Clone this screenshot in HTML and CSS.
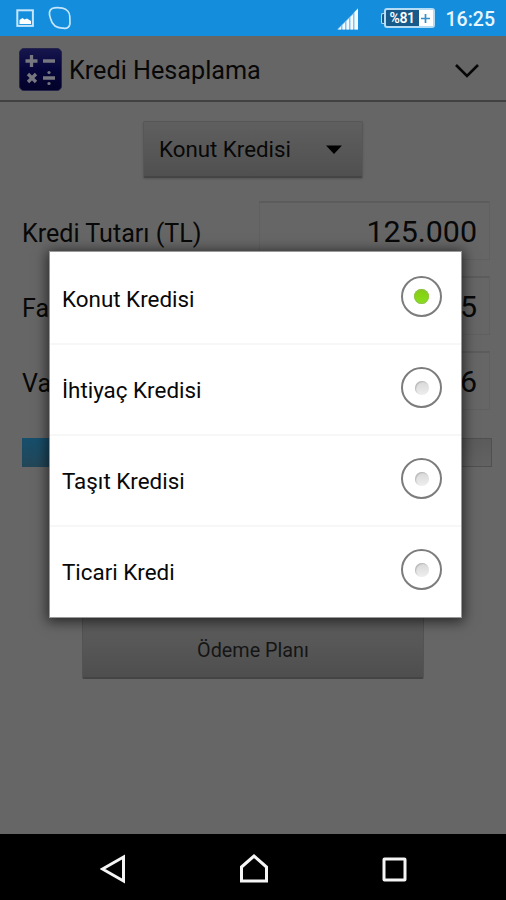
FILE: index.html
```html
<!DOCTYPE html>
<html lang="tr">
<head>
<meta charset="utf-8">
<title>Kredi Hesaplama</title>
<link rel="stylesheet" href="styles.css">
</head>
<body>
<div class="screen">
  <header class="status">
    <svg class="status-left" width="60" height="36" viewBox="0 0 60 36" fill="none">
      <rect x="1.3" y="10.3" width="15.6" height="15.6" stroke="#c4e5fa" stroke-width="2"/>
      <path d="M3.500 24v-4l3-2 2 1.500 2.500-1 4 2.500v3z" fill="#fff"/>
      <path d="M36 8.500c3-1.200 7-1 10.500-.4 4.500 1 7.300 4.500 7.300 8.400-.1 3 .5 5 0 8-.6 3-3.300 4.500-6.300 3.600-3-.2-5.500.2-8.500-2.100-3-2.300-3.800-4.500-4.500-7.500-1.300-3.500-1.800-8 1.500-10z" stroke="#c4e5fa" stroke-width="1.700"/>
    </svg>
    <div class="status-right">
      <svg class="signal" width="22" height="22" viewBox="0 0 22 22" fill="#f2faff">
        <path d="M0 21.500 21 .5v21z" opacity=".5"/>
        <path d="M1 21.500 4 18.500v3zM5.500 17l2.500-2.500v7H5.500zM9.500 13l2.500-2.500v11H9.500zM13.500 9l2.500-2.500v15h-2.500zM17.500 4 21 .5v21h-3.500z"/>
      </svg>
      <div class="nub"></div>
      <div class="battery"><span class="level">%81</span><span class="charge"><svg width="9" height="9" viewBox="0 0 9 9"><path d="M4.500 0v9M0 4.500h9" stroke="#368fcb" stroke-width="1.700"/></svg></span></div>
      <span class="clock">16:25</span>
    </div>
  </header>
  <div class="titlebar">
    <svg class="logo" width="43" height="43" viewBox="0 0 43 43">
      <defs><linearGradient id="navy" x2="0" y2="1"><stop stop-color="#17164d"/><stop offset=".45" stop-color="#07063d"/><stop offset="1" stop-color="#030229"/></linearGradient></defs>
      <rect x=".5" y=".5" width="42" height="42" rx="4.500" fill="url(#navy)" stroke="#25244b"/>
      <path d="M12.500 7v12M6.500 13h12M24 13h12M24 30h12M9 26l8 8M17 26l-8 8" stroke="#777780" stroke-width="3.300"/>
      <circle cx="30" cy="24.500" r="1.600" fill="#777780"/><circle cx="30" cy="35.500" r="1.600" fill="#777780"/>
    </svg>
    <h1>Kredi Hesaplama</h1>
    <svg class="chevron" width="26" height="16" viewBox="0 0 26 16"><path d="M2 2 13 13 24 2" fill="none" stroke="#070707" stroke-width="2.600"/></svg>
  </div>
  <main>
    <div class="spinner"><span>Konut Kredisi</span><svg width="16" height="9" viewBox="0 0 16 9"><path d="M0 .5h16L8 9z"/></svg></div>
    <div class="row"><label>Kredi Tutarı (TL)</label><div class="field">125.000</div></div>
    <div class="row"><label>Fa</label><div class="field">5</div></div>
    <div class="row"><label>Va</label><div class="field">6</div></div>
    <div class="progress"><div class="fill"></div></div>
    <div class="button">Ödeme Planı</div>
  </main>
  <nav>
    <svg width="26" height="30" viewBox="0 0 26 30"><path d="M2.500 15 23.500 3v24z"/></svg>
    <svg width="30" height="30" viewBox="0 0 30 30"><path d="M2.500 13 15 2 27.500 13v14h-25z"/></svg>
    <svg width="25" height="25" viewBox="0 0 25 25"><rect x="2" y="2" width="21" height="21" rx=".5"/></svg>
  </nav>
  <div class="dialog">
    <div class="option"><span>Konut Kredisi</span><i class="radio on"></i></div>
    <div class="option"><span>İhtiyaç Kredisi</span><i class="radio"></i></div>
    <div class="option"><span>Taşıt Kredisi</span><i class="radio"></i></div>
    <div class="option"><span>Ticari Kredi</span><i class="radio"></i></div>
  </div>
</div>
</body>
</html>
```
FILE: styles.css
```css
* { box-sizing: border-box; }
body { margin: 0; font-family: Roboto, sans-serif; color: #080808; }
.screen { position: relative; width: 506px; height: 900px; overflow: hidden; display: flex; flex-direction: column; background: #666; }
svg { display: block; flex: none; }
.status { height: 36px; flex: none; background: #148edc; display: flex; justify-content: space-between; padding: 0 11px 0 16px; }
.status-right { display: flex; align-items: center; }
.signal { margin-top: 2px; }
.nub { width: 3px; height: 11px; margin-left: 22px; border: 1px solid #b5dcf5; border-right: 0; border-radius: 2px 0 0 2px; background: #185b8b; }
.battery { display: flex; width: 51px; height: 20px; margin-right: 11px; border: 2px solid #b5dcf5; border-radius: 3px; background: #185b8b; }
.level { width: 33px; color: #fff; font-size: 14px; font-weight: 600; line-height: 16px; text-align: center; letter-spacing: -.5px; }
.charge { flex: 1; background: #fff; display: flex; align-items: center; justify-content: center; }
.clock { color: #e8f6ff; font-size: 19.5px; font-weight: 500; line-height: 36px; padding-top: 3px; }
.titlebar { height: 66px; flex: none; display: flex; align-items: center; padding: 0 26px 0 19px; border-bottom: 2px solid #414141; }
h1 { margin: 6px 0 0 7px; flex: 1; font-size: 25.2px; line-height: 32px; font-weight: 400; white-space: nowrap; }
.logo { margin-top: 2px; }
.chevron { margin-top: 6px; }
main { flex: 1; display: flex; flex-direction: column; padding: 19px 14px 0 22px; }
.spinner { display: flex; align-items: center; justify-content: space-between; width: 220px; height: 57px; margin-left: 121px; padding: 0 20px 0 15px; font-size: 22.3px; background: linear-gradient(#5f5f5f, #505050); border: 1px solid #575757; border-bottom: 2px solid #454545; border-radius: 2px; box-shadow: 0 1px 2px #555; }
.row { display: flex; justify-content: space-between; align-items: center; height: 59px; margin-bottom: 16px; }
.spinner + .row { margin-top: 23px; }
.row label { font-size: 25.1px; padding-top: 5px; }
.field { width: 231px; height: 59px; margin-right: 2px; padding-right: 12px; text-align: right; font-size: 30.4px; line-height: 57px; border: 1px solid #606060; border-top: 2px solid #5c5c5c; background: #666; }
.progress { height: 29px; margin-top: 12px; border: 1px solid #505050; background: linear-gradient(#5b5b5b, #626262); }
.fill { width: 130px; height: 29px; margin: -1px; background: linear-gradient(#164f6c, #234658); }
.button { width: 342px; height: 69px; margin: 143px 0 0 60px; padding-top: 9px; text-align: center; font-size: 19.8px; line-height: 62px; color: #151515; background: linear-gradient(#606060, #4e4e4e); border: 1px solid #535353; border-bottom: 2px solid #444; border-radius: 2px; }
nav { height: 66px; flex: none; display: flex; align-items: center; padding: 4px 99px 0 100px; justify-content: space-between; background: #000; }
nav svg { fill: none; stroke: #f5f5f5; stroke-width: 3; }
.dialog { position: absolute; left: 50px; top: 252px; width: 411px; height: 365px; padding-top: 2px; background: #fff; box-shadow: 0 0 0 1px #999, 0 2px 12px 3px rgba(0,0,0,.6); }
.option { display: flex; justify-content: space-between; align-items: center; height: 91px; padding: 0 19px 4px 12px; font-size: 22.4px; border-bottom: 2px solid #f7f7f7; }
.option:last-child { border-bottom-color: transparent; }
.option span { padding-top: 4px; }
.radio { width: 41px; height: 41px; display: flex; align-items: center; justify-content: center; border: 2px solid #7c7c7c; border-radius: 50%; }
.radio::after { content: ""; width: 14px; height: 14px; border-radius: 50%; background: linear-gradient(#d8d8d8, #eee); box-shadow: inset 1px 1px 1px #b8b8b8; }
.radio.on::after { width: 15px; height: 15px; background: linear-gradient(#84cc10, #8ae01c); box-shadow: inset 0 0 1px 1px #90c050; }
```
